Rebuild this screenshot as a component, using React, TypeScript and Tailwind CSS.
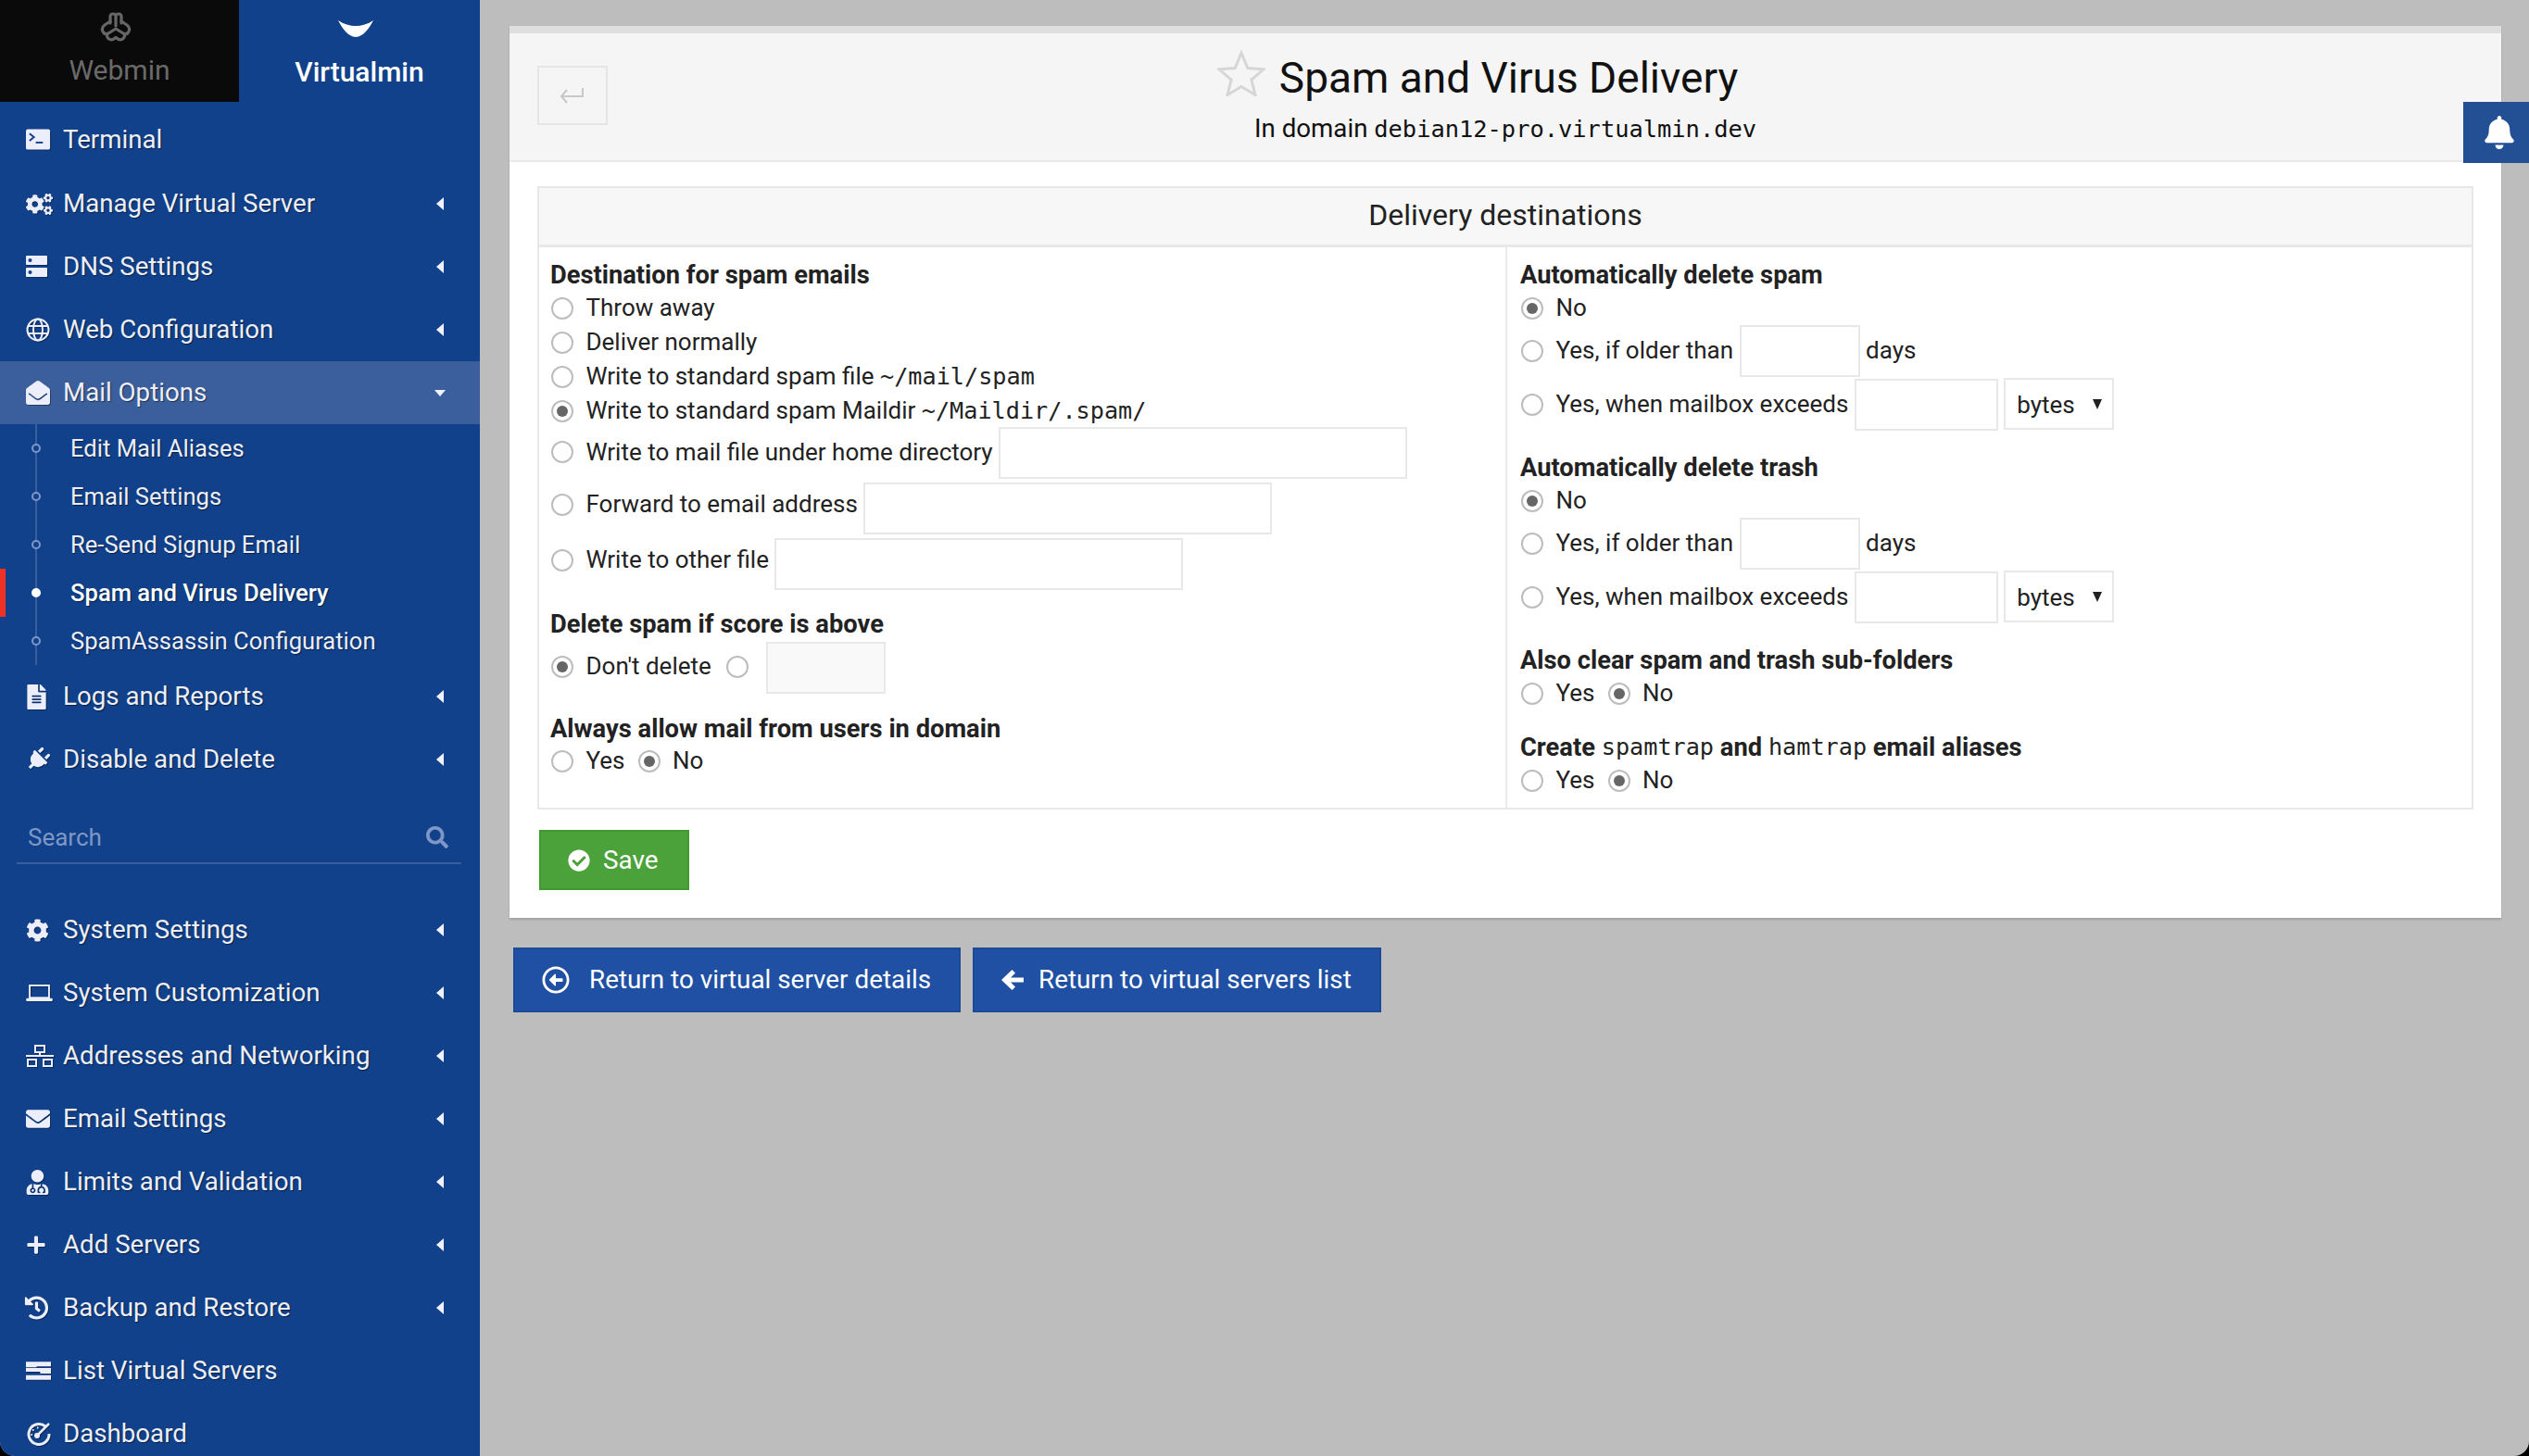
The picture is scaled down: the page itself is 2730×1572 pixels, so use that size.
import type { ReactNode } from "react";
import {
  FaBell,
  FaCheckCircle,
  FaCog,
  FaCogs,
  FaEnvelope,
  FaEnvelopeOpen,
  FaFileAlt,
  FaHistory,
  FaPlug,
  FaPlus,
  FaRegArrowAltCircleLeft,
  FaSearch,
  FaUserMd,
} from "react-icons/fa";

const TerminalIcon = () => (
  <svg viewBox="0 0 28 24" className="w-[27px] h-[24px]">
    <rect x="0" y="0" width="27" height="23" rx="2" fill="currentColor" />
    <path d="M4 5l5 4-5 4" fill="none" stroke="#11418a" strokeWidth="2" />
    <path d="M11 15h8" stroke="#11418a" strokeWidth="2" />
  </svg>
);

const DnsIcon = () => (
  <svg viewBox="0 0 24 24" className="w-[24px] h-[24px]">
    <rect x="0" y="0" width="23" height="10" rx="1" fill="currentColor" />
    <rect x="0" y="13" width="23" height="10" rx="1" fill="currentColor" />
    <circle cx="4.500" cy="5" r="2" fill="#11418a" />
    <circle cx="4.500" cy="18" r="2" fill="#11418a" />
  </svg>
);

const GlobeIcon = () => (
  <svg viewBox="0 0 26 26" className="w-[26px] h-[26px]" fill="none" stroke="currentColor" strokeWidth="2">
    <circle cx="13" cy="13" r="11.500" />
    <ellipse cx="13" cy="13" rx="5" ry="11.500" />
    <path d="M2 9h22M2 17h22" />
  </svg>
);

const LaptopIcon = () => (
  <svg viewBox="0 0 30 20" className="w-[29px] h-[19px]" fill="none" stroke="currentColor">
    <rect x="4" y="1" width="22" height="14" strokeWidth="2" />
    <rect x="0" y="15.500" width="30" height="3.500" rx="1" fill="currentColor" stroke="none" />
  </svg>
);

const NetworkIcon = () => (
  <svg viewBox="0 0 30 24" className="w-[30px] h-[24px]" fill="none" stroke="currentColor" strokeWidth="2">
    <rect x="10" y="1" width="10" height="7" />
    <rect x="2" y="16" width="9" height="7" />
    <rect x="19" y="16" width="9" height="7" />
    <path d="M15 8v4M0 12h30" />
  </svg>
);

const ListIcon = () => (
  <svg viewBox="0 0 28 20" className="w-[27px] h-[20px]" fill="currentColor">
    <path d="M0 0h28v5H12v1H0zM0 7h28v6H16v-2H0zM0 15h28v5H0z" />
  </svg>
);

const DashboardIcon = () => (
  <svg viewBox="0 0 28 26" className="w-[28px] h-[26px]" fill="none" stroke="currentColor">
    <path d="M21 5a11 11 0 1 0 4 8" strokeWidth="3" />
    <path d="M12 15L25 2" strokeWidth="2.500" />
    <circle cx="12" cy="15" r="3" fill="currentColor" stroke="none" />
    <path d="M7 9h1.500M12 6.500h1.500M5.500 14h1.500" strokeWidth="2" />
  </svg>
);

const WebminLogo = () => (
  <svg
    viewBox="0 0 34 32"
    className="w-[34px] h-[32px] mr-[8px]"
    fill="none"
    stroke="#666666"
    strokeWidth="3.200"
    strokeLinecap="round"
    strokeLinejoin="round"
  >
    <path d="M11 12V5Q11 2 14 2Q17 2 17 5V15M17 5Q17 2 20 2Q23 2 23 5V12" />
    <path d="M11 10L5 14Q1 17 3 21Q5 25 9 23L17 18L25 23Q29 25 31 21Q33 17 29 14L23 10" />
    <path d="M7.500 24Q7 28 10.500 29.500Q13 31 17 27.500Q21 31 23.500 29.500Q27 28 26.500 24" />
  </svg>
);

const StarIcon = () => (
  <svg
    viewBox="0 0 52 50"
    className="w-[52px] h-[50px] shrink-0 -ml-[67px] mr-[15px] -mt-[10px]"
    fill="none"
    stroke="#d6d6d6"
    strokeWidth="3"
  >
    <path d="M26 3l6.800 16.500 17.200 1.300-13.100 11.200 4.100 16.500L26 39.500 11 48.500l4.100-16.500L2 20.800l17.200-1.300z" />
  </svg>
);

const Caret = ({ open = false }: { open?: boolean }) =>
  open ? (
    <svg viewBox="0 0 12 7" className="w-[12px] h-[7px] fill-[#f0f1fc]">
      <path d="M0 0h12L6 7z" />
    </svg>
  ) : (
    <svg viewBox="0 0 8 14" className="w-[8px] h-[14px] fill-[#f0f1fc] mx-[2px]">
      <path d="M8 0v14L0 7z" />
    </svg>
  );

const MenuRow = ({
  icon,
  label,
  caret = true,
  active = false,
  open = false,
}: {
  icon: ReactNode;
  label: string;
  caret?: boolean;
  active?: boolean;
  open?: boolean;
}) => (
  <div
    className={`flex items-center h-[68px] pl-[28px] pr-[37px] shrink-0 text-[#eceefb] ${active ? "bg-[#3a5f9c]" : ""}`}
  >
    <span className="w-[40px] shrink-0 flex items-center [filter:drop-shadow(1px_1px_0_rgba(0,0,0,0.35))]">
      {icon}
    </span>
    <span className="flex-1 text-[27.700px] leading-[36px] [text-shadow:1px_1px_1px_rgba(0,0,0,0.5)]">
      {label}
    </span>
    {caret && <Caret open={open} />}
  </div>
);

const SubRow = ({ label, current = false }: { label: string; current?: boolean }) => (
  <div className="relative flex items-center h-[52px] pl-[76px]">
    {current && <span className="absolute left-0 top-0 w-[6px] h-[52px] bg-[#ee3124]" />}
    <span
      className={`absolute left-[34px] top-[21px] w-[10px] h-[10px] rounded-full border-2 ${
        current ? "bg-white border-white" : "bg-[#11418a] border-[#7f97c7]"
      }`}
    />
    <span
      className={`text-[25.600px] leading-[34px] [text-shadow:1px_1px_1px_rgba(0,0,0,0.5)] ${
        current ? "text-white font-medium" : "text-[#eceefb]"
      }`}
    >
      {label}
    </span>
  </div>
);

const Sidebar = () => (
  <aside className="w-[518px] h-[1572px] shrink-0 bg-[#11418a] overflow-hidden flex flex-col">
    <div className="flex h-[110px] shrink-0">
      <div className="w-[258px] bg-[#0a0a0a] flex flex-col items-center pt-[13px]">
        <WebminLogo />
        <span className="mt-[11px] text-[30px] leading-[40px] text-[#6a6a6a]">Webmin</span>
      </div>
      <div className="flex-1 flex flex-col items-center pt-[22px]">
        <svg viewBox="0 0 38 18" className="w-[38px] h-[18px] fill-white mr-[8px]">
          <path d="M0 0c6 4 13 6 19 6s13-2 19-6c-4 8-11 18-19 18S4 8 0 0z" />
        </svg>
        <span className="mt-[18px] text-[30px] leading-[40px] font-medium text-white">Virtualmin</span>
      </div>
    </div>
    <div className="mt-[7px] pb-[1px]">
      <MenuRow icon={<TerminalIcon />} label="Terminal" caret={false} />
    </div>
    <MenuRow icon={<FaCogs className="w-[29px] h-[27px]" />} label="Manage Virtual Server" />
    <MenuRow icon={<DnsIcon />} label="DNS Settings" />
    <MenuRow icon={<GlobeIcon />} label="Web Configuration" />
    <MenuRow icon={<FaEnvelopeOpen className="w-[26px] h-[26px]" />} label="Mail Options" active open />
    <div className="relative h-[260px] shrink-0">
      <span className="absolute left-[38px] top-0 w-[2px] h-[260px] bg-[#3a5f9c]" />
      <SubRow label="Edit Mail Aliases" />
      <SubRow label="Email Settings" />
      <SubRow label="Re-Send Signup Email" />
      <SubRow label="Spam and Virus Delivery" current />
      <SubRow label="SpamAssassin Configuration" />
    </div>
    <MenuRow icon={<FaFileAlt className="w-[23px] h-[27px]" />} label="Logs and Reports" />
    <MenuRow icon={<FaPlug className="w-[26px] h-[26px] rotate-45" />} label="Disable and Delete" />
    <div className="ml-[18px] mr-[20px] mt-[30px] h-[49px] flex items-center justify-between pl-[12px] pr-[14px] pb-[8px] border-b-2 border-[#3a5f9c] shrink-0">
      <span className="text-[26px] leading-[34px] text-[#7f97c7]">Search</span>
      <FaSearch className="w-[24px] h-[24px] text-[#7f97c7]" />
    </div>
    <div className="mt-[37px] flex flex-col">
      <MenuRow icon={<FaCog className="w-[25px] h-[25px]" />} label="System Settings" />
      <MenuRow icon={<LaptopIcon />} label="System Customization" />
      <MenuRow icon={<NetworkIcon />} label="Addresses and Networking" />
      <MenuRow icon={<FaEnvelope className="w-[26px] h-[26px]" />} label="Email Settings" />
      <MenuRow icon={<FaUserMd className="w-[25px] h-[27px]" />} label="Limits and Validation" />
      <MenuRow icon={<FaPlus className="w-[22px] h-[22px]" />} label="Add Servers" />
      <MenuRow icon={<FaHistory className="w-[29px] h-[26px] -ml-[3px]" />} label="Backup and Restore" />
      <MenuRow icon={<ListIcon />} label="List Virtual Servers" caret={false} />
      <MenuRow icon={<DashboardIcon />} label="Dashboard" caret={false} />
    </div>
  </aside>
);

const Radio = ({ checked = false }: { checked?: boolean }) => (
  <span className="w-[24px] h-[24px] shrink-0 rounded-full border-2 border-[#bdbdbd] bg-white flex items-center justify-center">
    {checked && <span className="w-[12px] h-[12px] rounded-full bg-[#666666]" />}
  </span>
);

const Mono = ({ children }: { children: ReactNode }) => (
  <span className="font-['DejaVu_Sans_Mono',monospace] font-normal text-[25.200px]">{children}</span>
);

const Label = ({ children }: { children: ReactNode }) => (
  <div className="h-[37px] pt-[3px] -ml-[1px] flex items-center font-bold text-[27.300px] whitespace-pre">{children}</div>
);

const Choice = ({
  checked,
  children,
  className = "h-[37px]",
}: {
  checked?: boolean;
  children?: ReactNode;
  className?: string;
}) => (
  <div className={`flex items-center whitespace-pre ${className}`}>
    <Radio checked={checked} />
    <span className="ml-[13.500px]">{children}</span>
  </div>
);

const YesNo = ({ className = "" }: { className?: string }) => (
  <div className={`h-[37px] flex items-center ${className}`}>
    <Radio />
    <span className="ml-[13.500px] w-[56px]">Yes</span>
    <Radio checked />
    <span className="ml-[13.500px]">No</span>
  </div>
);

const Field = ({ className }: { className: string }) => (
  <input type="text" aria-label="value" className={`border-2 border-[#e8e8e8] bg-white outline-none ${className}`} />
);

const Bytes = () => (
  <div className="ml-[6px] w-[119px] h-[56px] -mt-[3px] border-2 border-[#e8e8e8] flex items-center justify-between pl-[12px] pr-[11px]">
    <span className="pt-[3px]">bytes</span>
    <svg viewBox="0 0 10 12" className="w-[10px] h-[12px] fill-[#222222]">
      <path d="M0 1h10L5 12z" />
    </svg>
  </div>
);

const AutoDelete = ({ title }: { title: string }) => (
  <>
    <Label>{title}</Label>
    <Choice checked>No</Choice>
    <div className="h-[58px] mt-[-1px] flex items-center">
      <Choice className="h-[56px] -mt-[1px]">Yes, if older than</Choice>
      <Field className="ml-[7px] w-[130px] h-[56px]" />
      <span className="ml-[6px] -mt-[2px]">days</span>
    </div>
    <div className="h-[58px] flex items-center">
      <Choice className="h-[56px] -mt-[1px]">Yes, when mailbox exceeds</Choice>
      <Field className="ml-[7px] w-[155px] h-[56px]" />
      <Bytes />
    </div>
  </>
);

const Table = () => (
  <div className="border-2 border-[#e8e8e8]">
    <div className="h-[64px] pb-[4px] bg-[#f7f7f7] border-b-[3px] border-[#e8e8e8] flex items-center justify-center text-[32px] text-[#222222]">
      Delivery destinations
    </div>
    <div className="flex h-[605px] text-[26px] text-[#222222]">
      <div className="w-[1043px] pl-[13px] pt-[10px] shrink-0">
        <Label>Destination for spam emails</Label>
        <Choice>Throw away</Choice>
        <Choice>Deliver normally</Choice>
        <Choice>
          Write to standard spam file <Mono>~/mail/spam</Mono>
        </Choice>
        <Choice checked>
          Write to standard spam Maildir <Mono>~/Maildir/.spam/</Mono>
        </Choice>
        <div className="h-[60px] -mt-[3px] flex items-center">
          <Choice className="h-[56px] -mt-[2px]">Write to mail file under home directory</Choice>
          <Field className="ml-[6px] w-[441px] h-[56px]" />
        </div>
        <div className="h-[60px] flex items-center">
          <Choice className="h-[56px] -mt-[8.500px]">Forward to email address</Choice>
          <Field className="ml-[6px] w-[441px] h-[56px]" />
        </div>
        <div className="h-[60px] flex items-center">
          <Choice className="h-[56px] -mt-[8.500px]">Write to other file</Choice>
          <Field className="ml-[6px] w-[441px] h-[56px]" />
        </div>
        <div className="mt-[15px]">
          <Label>Delete spam if score is above</Label>
        </div>
        <div className="h-[56px] mt-[2px] flex items-center">
          <Choice checked className="h-[56px] -mt-[3px]">
            Don't delete
          </Choice>
          <span className="ml-[16.500px] -mt-[3px]">
            <Radio />
          </span>
          <input
            type="text"
            aria-label="score"
            className="ml-[19px] w-[129px] h-[56px] border-2 border-[#e8e8e8] bg-[#f9f9f9]"
          />
        </div>
        <div className="mt-[18px]">
          <Label>Always allow mail from users in domain</Label>
        </div>
        <YesNo className="-mt-[1px]" />
      </div>
      <div className="flex-1 border-l-2 border-[#ebebeb] pl-[15px] pt-[10px]">
        <AutoDelete title="Automatically delete spam" />
        <div className="mt-[19px]">
          <AutoDelete title="Automatically delete trash" />
        </div>
        <div className="mt-[19px]">
          <Label>Also clear spam and trash sub-folders</Label>
        </div>
        <YesNo />
        <div className="mt-[20px]">
          <Label>
            Create <Mono>spamtrap</Mono> and <Mono>hamtrap</Mono> email aliases
          </Label>
        </div>
        <YesNo />
      </div>
    </div>
  </div>
);

const Panel = () => (
  <div className="bg-white border-t-[8px] border-[#dedede] shadow-[0_2px_2px_rgba(0,0,0,0.15)]">
    <div className="grid grid-cols-[1fr_auto_1fr] h-[139px] bg-[#f5f5f5] border-b-2 border-[#eaeaea]">
      <div className="pl-[30px] pt-[35px]">
        <div className="w-[76px] h-[64px] border-2 border-[#e5e5e5] flex items-center justify-center">
          <svg viewBox="0 0 30 20" className="w-[30px] h-[20px]" fill="none" stroke="#c8c8c8" strokeWidth="2">
            <path d="M26 2v9H3M9 4l-6 7 6 7" />
          </svg>
        </div>
      </div>
      <div className="flex flex-col items-center">
        <div className="flex items-center h-[54px] mt-[21px] ml-[7px]">
          <StarIcon />
          <h1 className="text-[46px] leading-[54px] text-[#111111]">Spam and Virus Delivery</h1>
        </div>
        <div className="mt-[10px] text-[27.700px] leading-[36px] text-[#111111] whitespace-pre">
          In domain <span className="font-['DejaVu_Sans_Mono',monospace] text-[25.400px]">debian12-pro.virtualmin.dev</span>
        </div>
      </div>
      <div />
    </div>
    <div className="px-[30px] pt-[26px] pb-[30px]">
      <Table />
      <button className="ml-[2px] mt-[22px] w-[162px] h-[65px] bg-[#4ca23a] border-2 border-[#419a30] text-white text-[27.840px] flex items-center pl-[29px] gap-[14px]">
        <FaCheckCircle className="w-[24px] h-[24px]" />
        Save
      </button>
    </div>
  </div>
);

export default function App() {
  return (
    <div className="w-[2730px] h-[1572px] bg-black">
      <div className="relative w-full h-full rounded-b-[16px] overflow-hidden flex bg-[#bdbdbd] font-['Roboto',sans-serif]">
        <Sidebar />
        <main className="flex-1 pt-[28px] pl-[32px] pr-[30px]">
          <Panel />
          <div className="ml-[4px] mt-[32px] flex gap-[13px]">
            <button className="w-[483px] h-[70px] bg-[#2050a3] border-2 border-[#1d4a98] text-white text-[27.840px] flex items-center pl-[29px] gap-[21px]">
              <FaRegArrowAltCircleLeft className="w-[30px] h-[30px]" />
              Return to virtual server details
            </button>
            <button className="w-[441px] h-[70px] bg-[#2050a3] border-2 border-[#1d4a98] text-white text-[27.840px] flex items-center pl-[29px] gap-[16px]">
              <svg viewBox="0 0 24 24" className="w-[24px] h-[24px] fill-white">
                <path d="M0 12L11.500 1l3.500 3.500-5 5h14v5H10l5 5-3.500 3.500z" />
              </svg>
              Return to virtual servers list
            </button>
          </div>
        </main>
        <div className="absolute right-0 top-[110px] w-[71px] h-[66px] pl-[7px] bg-[#234f94] flex items-center justify-center">
          <FaBell className="w-[36px] h-[36px] text-white" />
        </div>
      </div>
    </div>
  );
}
